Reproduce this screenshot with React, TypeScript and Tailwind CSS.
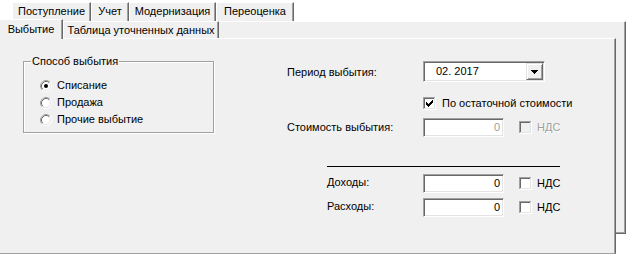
import React from "react";

function Tab({ label, w, className = "" }: { label: string; w: string; className?: string }) {
  return (
    <div
      className={`${w} flex items-center justify-center bg-[#f0f0f0] border-l border-t border-r border-l-white border-t-white border-r-[#696969] shadow-[inset_-1px_0_0_#a0a0a0] whitespace-nowrap ${className}`}
    >
      {label}
    </div>
  );
}

function Radio({ checked }: { checked?: boolean }) {
  return (
    <svg width="12" height="12" viewBox="0 0 12 12" className="shrink-0">
      <circle cx="6" cy="6" r="5" fill="#fff" />
      <path d="M2.11 9.89A5.5 5.5 0 0 1 9.89 2.11" fill="none" stroke="#a0a0a0" />
      <path d="M9.89 2.11A5.5 5.5 0 0 1 2.11 9.89" fill="none" stroke="#ffffff" />
      <path d="M2.82 9.18A4.5 4.5 0 0 1 9.18 2.82" fill="none" stroke="#696969" />
      <path d="M9.18 2.82A4.5 4.5 0 0 1 2.82 9.18" fill="none" stroke="#e3e3e3" />
      {checked && <circle cx="6" cy="6" r="2" fill="#000" />}
    </svg>
  );
}

function Check({ checked, disabled }: { checked?: boolean; disabled?: boolean }) {
  return (
    <svg width="13" height="13" viewBox="0 0 13 13" shapeRendering="crispEdges" className="shrink-0">
      <rect x="0" y="0" width="13" height="13" fill="#fff" />
      <rect x="0" y="0" width="12" height="1" fill="#a0a0a0" />
      <rect x="0" y="0" width="1" height="12" fill="#a0a0a0" />
      <rect x="1" y="1" width="10" height="1" fill="#696969" />
      <rect x="1" y="1" width="1" height="10" fill="#696969" />
      <rect x="1" y="11" width="11" height="1" fill="#e3e3e3" />
      <rect x="11" y="1" width="1" height="11" fill="#e3e3e3" />
      <rect x="2" y="2" width="9" height="9" fill={disabled ? "#f0f0f0" : "#fff"} />
      {checked && (
        <path
          d="M9 3h1v1h-1z M8 4h2v1h-2z M3 5h1v1h-1z M7 5h3v1h-3z M3 6h2v1h-2z M6 6h3v1h-3z M3 7h5v1h-5z M4 8h3v1h-3z M5 9h1v1h-1z"
          fill="#000"
        />
      )}
    </svg>
  );
}

function Field({ value, disabled }: { value: string; disabled?: boolean }) {
  return (
    <div
      className={`w-[81px] h-[19px] shrink-0 bg-white border border-t-[#a0a0a0] border-l-[#a0a0a0] border-r-white border-b-white shadow-[inset_1px_1px_0_#696969,inset_-1px_-1px_0_#e3e3e3] flex items-center justify-end pr-[3px] ${
        disabled ? "text-[#a0a0a0]" : "text-black"
      }`}
    >
      {value}
    </div>
  );
}

function Nds({ disabled }: { disabled?: boolean }) {
  return (
    <div className="flex items-center gap-[5px] ml-[15px]">
      <Check disabled={disabled} />
      <span className={disabled ? "text-[#a0a0a0] [text-shadow:1px_1px_0_#fff]" : "text-black"}>НДС</span>
    </div>
  );
}

export default function App() {
  return (
    <div className="w-[626px] h-[254px] bg-white overflow-hidden font-['Liberation_Sans',Arial,sans-serif] text-[11px] leading-[13px] text-black">
      {/* outer tab row */}
      <div className="flex h-[21px] pl-[12px] pt-[2px]">
        <Tab label="Поступление" w="w-[79px] h-[19px] pb-[1px]" />
        <Tab label="Учет" w="w-[38px] h-[19px] pb-[1px]" />
        <Tab label="Модернизация" w="w-[87px] h-[19px] pb-[1px]" />
        <Tab label="Переоценка" w="w-[78px] h-[19px] pb-[1px]" />
      </div>

      {/* outer page */}
      <div className="w-[626px] h-[213px] bg-[#f0f0f0] border-t border-r border-b border-t-white border-r-[#696969] border-b-[#696969] shadow-[inset_-1px_-1px_0_#a0a0a0]">
        <div className="-mt-[3px] w-[616px]">
          {/* inner tab row */}
          <div className="flex items-start h-[19px]">
            <div className="relative z-10 w-[63px] h-[20px] bg-[#f0f0f0] border-t border-r border-t-white border-r-[#696969] shadow-[inset_-1px_0_0_#a0a0a0] flex items-center justify-center pb-[1px]">
              Выбытие
            </div>
            <div className="mt-[2px] w-[156px] h-[17px] bg-[#f0f0f0] border-l border-t border-r border-l-white border-t-white border-r-[#696969] shadow-[inset_-1px_0_0_#a0a0a0] flex items-center justify-center whitespace-nowrap">
              Таблица уточненных данных
            </div>
          </div>

          {/* inner page */}
          <div className="w-[616px] h-[216px] bg-[#f0f0f0] border-t border-r border-b border-t-white border-r-[#696969] border-b-[#a0a0a0] shadow-[inset_-1px_0_0_#a0a0a0] flex items-start">
            {/* group box */}
            <div className="relative ml-[23px] mt-[22px] w-[191px] h-[72px] shrink-0 border border-[#a0a0a0] shadow-[inset_1px_1px_0_#fff,1px_1px_0_#fff]">
              <span className="absolute -top-[7px] left-[7px] px-[1px] bg-[#f0f0f0] leading-[13px] whitespace-nowrap">
                Способ выбытия
              </span>
              <div className="flex flex-col pt-[15px] pl-[16px]">
                <div className="flex items-center h-[17px] gap-[5px]">
                  <Radio checked />
                  <span>Списание</span>
                </div>
                <div className="flex items-center h-[17px] gap-[5px]">
                  <Radio />
                  <span>Продажа</span>
                </div>
                <div className="flex items-center h-[17px] gap-[5px]">
                  <Radio />
                  <span>Прочие выбытие</span>
                </div>
              </div>
            </div>

            {/* right column */}
            <div className="ml-[73px] pt-[22px] flex flex-col">
              <div className="flex items-center h-[21px]">
                <span className="w-[136px] shrink-0 pt-[1px]">Период выбытия:</span>
                <div className="w-[122px] h-[21px] bg-white border border-t-[#a0a0a0] border-l-[#a0a0a0] border-r-white border-b-white shadow-[inset_1px_1px_0_#696969,inset_-1px_-1px_0_#e3e3e3] p-[1px] flex items-center">
                  <span className="flex-1 pl-[11px]">02. 2017</span>
                  <div className="w-[17px] h-[17px] bg-[#f0f0f0] border border-t-[#e3e3e3] border-l-[#e3e3e3] border-r-[#696969] border-b-[#696969] shadow-[inset_1px_1px_0_#fff,inset_-1px_-1px_0_#a0a0a0] flex items-center justify-center">
                    <svg width="7" height="4" viewBox="0 0 7 4" shapeRendering="crispEdges">
                      <path d="M0 0h7v1h-7z M1 1h5v1h-5z M2 2h3v1h-3z M3 3h1v1h-1z" fill="#000" />
                    </svg>
                  </div>
                </div>
              </div>

              <div className="flex items-center h-[13px] mt-[15px] ml-[136px] gap-[6px]">
                <Check checked />
                <span className="whitespace-nowrap">По остаточной стоимости</span>
              </div>

              <div className="flex items-center h-[19px] mt-[8px]">
                <span className="w-[136px] shrink-0">Стоимость выбытия:</span>
                <Field value="0" disabled />
                <Nds disabled />
              </div>

              <div className="ml-[40px] mt-[29px] w-[233px] h-[1px] bg-black" />

              <div className="flex items-center h-[19px] mt-[7px] ml-[40px]">
                <span className="w-[96px] shrink-0 -mt-[2px]">Доходы:</span>
                <Field value="0" />
                <Nds />
              </div>

              <div className="flex items-center h-[19px] mt-[5px] ml-[40px]">
                <span className="w-[96px] shrink-0 -mt-[2px]">Расходы:</span>
                <Field value="0" />
                <Nds />
              </div>
            </div>
          </div>
        </div>
      </div>
    </div>
  );
}
